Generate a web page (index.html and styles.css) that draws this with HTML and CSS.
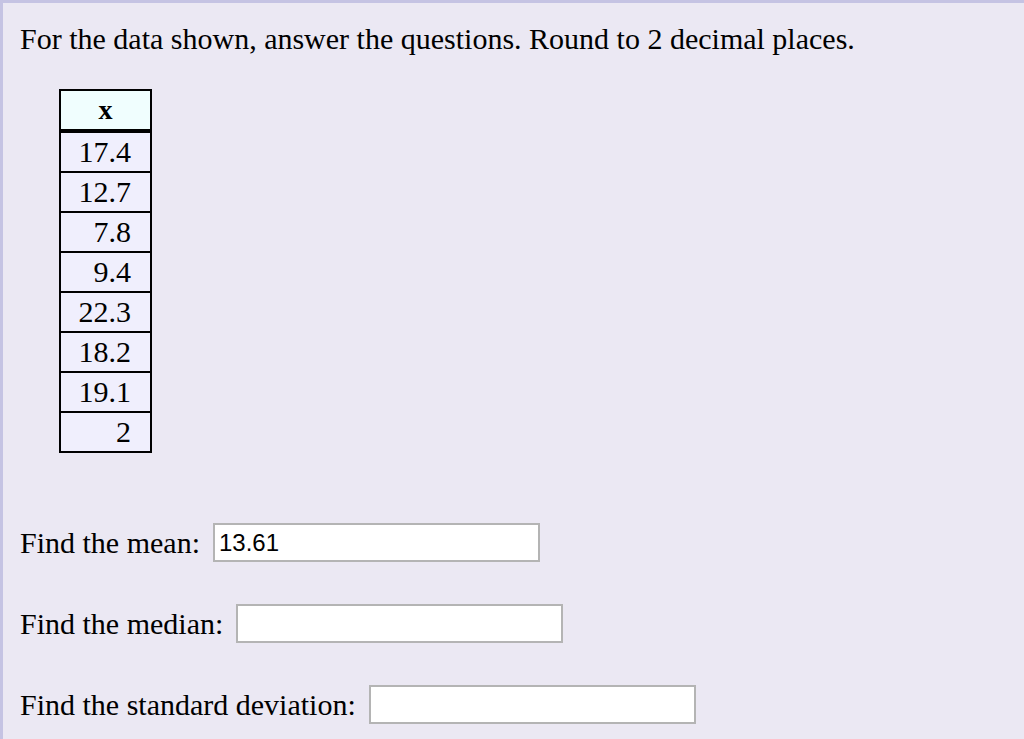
FILE: index.html
```html
<!DOCTYPE html>
<html>
<head>
<meta charset="utf-8">
<link rel="stylesheet" href="styles.css">
</head>
<body>
<div class="page">
  <p class="intro">For the data shown, answer the questions. Round to 2 decimal places.</p>
  <table class="data">
    <thead><tr><th>x</th></tr></thead>
    <tbody>
      <tr><td>17.4</td></tr>
      <tr><td>12.7</td></tr>
      <tr><td>7.8</td></tr>
      <tr><td>9.4</td></tr>
      <tr><td>22.3</td></tr>
      <tr><td>18.2</td></tr>
      <tr><td>19.1</td></tr>
      <tr><td>2</td></tr>
    </tbody>
  </table>
  <div class="q q-first"><span class="label">Find the mean:</span><input class="answer" type="text" value="13.61"></div>
  <div class="q"><span class="label">Find the median:</span><input class="answer" type="text" value=""></div>
  <div class="q"><span class="label">Find the standard deviation:</span><input class="answer" type="text" value=""></div>
</div>
</body>
</html>
```

FILE: styles.css
```css
html, body {
  margin: 0;
  padding: 0;
  background: #ebe8f3;
}
.page {
  box-sizing: border-box;
  width: 1024px;
  height: 739px;
  border-top: 3px solid #c5c3e3;
  border-left: 3px solid #c5c3e3;
  padding: 0 0 0 17px;
  font-family: "Liberation Serif", "Times New Roman", serif;
  font-size: 30px;
  color: #000;
  overflow: hidden;
}
.intro {
  margin: 20px 0 0 0;
  line-height: 32px;
}
.data {
  margin: 34px 0 0 39px;
  border-collapse: collapse;
  border: 2px solid #000;
}
.data th {
  background: #f0fefe;
  border: 2px solid #000;
  border-bottom: 4px solid #000;
  width: 89px;
  height: 38px;
  padding: 0;
  font-weight: bold;
  font-size: 28px;
  text-align: center;
}
.data td {
  background: #f0effd;
  border: 2px solid #000;
  height: 38px;
  padding: 0 19px 0 0;
  text-align: right;
  line-height: 30px;
}
.q {
  display: flex;
  align-items: center;
  margin-top: 42px;
  height: 39px;
}
.q-first {
  margin-top: 70px;
}
.label {
  margin-right: 13px;
}
.answer {
  box-sizing: border-box;
  width: 327px;
  height: 39px;
  border: 2px solid #b4b4b4;
  background: #fff;
  padding: 0 4px;
  font-family: "Liberation Sans", Arial, sans-serif;
  font-size: 24px;
  color: #000;
  outline: none;
}
```
